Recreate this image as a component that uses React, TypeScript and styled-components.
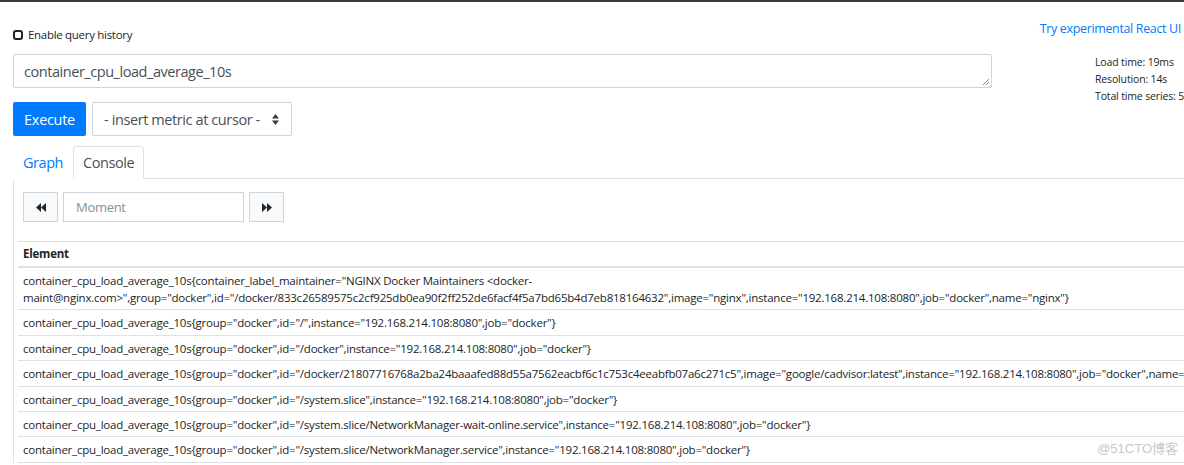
import styled, { createGlobalStyle } from "styled-components";

const GlobalStyle = createGlobalStyle`
  html, body {
    margin: 0;
    padding: 0;
    overflow: hidden;
    background: #fff;
  }
  body {
    font-family: "Open Sans", "Noto Sans", Arial, sans-serif;
    color: #212529;
  }
  * {
    box-sizing: border-box;
  }
`;

const Page = styled.div`
  position: relative;
  width: 1184px;
  height: 465px;
  overflow: hidden;
  border-top: 2px solid #343a40;
`;

const Wrap = styled.div`
  padding: 0 0 0 13px;
  width: 1300px;
`;

const TopRow = styled.div`
  display: flex;
  justify-content: space-between;
  align-items: flex-start;
  width: 1168px;
  padding-top: 18px;
`;

const CheckLabel = styled.label`
  display: flex;
  align-items: center;
  gap: 5px;
  font-size: 11.5px;
  letter-spacing: -0.3px;
  color: #212529;
  margin-top: 7px;
`;

const CheckBox = styled.span`
  display: inline-block;
  width: 10px;
  height: 10px;
  border: 2px solid #222;
  border-radius: 3px;
`;

const ReactLink = styled.a`
  font-size: 12.5px;
  letter-spacing: -0.35px;
  color: #007bff;
  text-decoration: none;
`;

const ExprRow = styled.div`
  display: flex;
  align-items: flex-start;
  margin-top: 12px;
  height: 34px;
`;

const ExprBox = styled.div`
  position: relative;
  width: 979px;
  height: 34px;
  border: 1px solid #ced4da;
  border-radius: 2px;
  padding: 7px 10px;
  font-size: 14.5px;
  letter-spacing: -0.45px;
  color: #495057;
`;

const Grip = styled.svg`
  position: absolute;
  right: 1px;
  bottom: 1px;
`;

const Stats = styled.div`
  margin-left: 103px;
  font-size: 10.5px;
  letter-spacing: -0.15px;
  line-height: 17px;
  color: #212529;
  white-space: nowrap;
`;

const ButtonRow = styled.div`
  display: flex;
  gap: 6px;
  margin-top: 14px;
`;

const PrimaryButton = styled.button`
  height: 34px;
  width: 73px;
  border: 0;
  border-radius: 2px;
  background: #007bff;
  color: #fff;
  font-family: inherit;
  font-size: 14.5px;
  letter-spacing: -0.3px;
  padding: 0;
`;

const SelectBox = styled.div`
  display: flex;
  align-items: center;
  justify-content: space-between;
  height: 34px;
  width: 200px;
  border: 1px solid #ced4da;
  border-radius: 2px;
  padding: 0 12px 0 11px;
  font-size: 14.5px;
  letter-spacing: -0.4px;
  color: #495057;
`;

const Tabs = styled.div`
  display: flex;
  align-items: flex-end;
  margin-top: 10px;
  height: 33px;
  border-bottom: 1px solid #dee2e6;
`;

const Tab = styled.div<{ $active?: boolean }>`
  height: 33px;
  padding: 0 9px;
  display: flex;
  align-items: center;
  font-size: 14.5px;
  letter-spacing: -0.45px;
  margin-bottom: -1px;
  color: ${(p) => (p.$active ? "#495057" : "#007bff")};
  background: #fff;
  border: 1px solid ${(p) => (p.$active ? "#dee2e6" : "transparent")};
  border-bottom-color: ${(p) => (p.$active ? "#fff" : "transparent")};
  border-radius: 4px 4px 0 0;
`;

const Panel = styled.div`
  border-left: 1px solid #dee2e6;
  padding: 13px 0 0 4px;
`;

const MomentRow = styled.div`
  display: flex;
  gap: 5px;
  margin-left: 5px;
`;

const NavButton = styled.button`
  width: 35px;
  height: 30px;
  background: #f8f9fa;
  border: 1px solid #ced4da;
  border-radius: 0;
  display: flex;
  align-items: center;
  justify-content: center;
  padding: 0;
`;

const MomentInput = styled.div`
  width: 181px;
  height: 30px;
  border: 1px solid #ced4da;
  padding: 0 12px;
  display: flex;
  align-items: center;
  font-size: 13px;
  letter-spacing: -0.3px;
  color: #868e96;
`;

const Table = styled.table`
  margin-top: 19px;
  border-collapse: collapse;
  font-size: 11.5px;
  letter-spacing: -0.22px;
  white-space: nowrap;
  min-width: 1180px;
`;

const HeadCell = styled.th`
  text-align: left;
  font-weight: 700;
  padding: 4px 5px 4px;
  line-height: 16px;
  border-top: 1px solid #dee2e6;
  border-bottom: 2px solid #dee2e6;
`;

const Cell = styled.td`
  padding: 4px 5px 3.4px;
  line-height: 17px;
  border-bottom: 1px solid #dee2e6;
  color: #212529;
`;

const Watermark = styled.div`
  position: absolute;
  right: 6px;
  bottom: 8px;
  font-size: 13px;
  color: #c8c8c8;
  font-family: "Liberation Sans", "Noto Sans CJK SC", sans-serif;
  background: rgba(255, 255, 255, 0.6);
`;

const rows: string[][] = [
  [
    'container_cpu_load_average_10s{container_label_maintainer="NGINX Docker Maintainers <docker-',
    'maint@nginx.com>",group="docker",id="/docker/833c26589575c2cf925db0ea90f2ff252de6facf4f5a7bd65b4d7eb818164632",image="nginx",instance="192.168.214.108:8080",job="docker",name="nginx"}',
  ],
  ['container_cpu_load_average_10s{group="docker",id="/",instance="192.168.214.108:8080",job="docker"}'],
  ['container_cpu_load_average_10s{group="docker",id="/docker",instance="192.168.214.108:8080",job="docker"}'],
  [
    'container_cpu_load_average_10s{group="docker",id="/docker/21807716768a2ba24baaafed88d55a7562eacbf6c1c753c4eeabfb07a6c271c5",image="google/cadvisor:latest",instance="192.168.214.108:8080",job="docker",name="cadvisor"}',
  ],
  ['container_cpu_load_average_10s{group="docker",id="/system.slice",instance="192.168.214.108:8080",job="docker"}'],
  [
    'container_cpu_load_average_10s{group="docker",id="/system.slice/NetworkManager-wait-online.service",instance="192.168.214.108:8080",job="docker"}',
  ],
  [
    'container_cpu_load_average_10s{group="docker",id="/system.slice/NetworkManager.service",instance="192.168.214.108:8080",job="docker"}',
  ],
];

function BackIcon() {
  return (
    <svg width="10" height="9" viewBox="0 0 10 9">
      <path d="M0 4.5L5 0v9zM5 4.5L10 0v9z" fill="#212529" />
    </svg>
  );
}

function ForwardIcon() {
  return (
    <svg width="10" height="9" viewBox="0 0 10 9">
      <path d="M10 4.5L5 0v9zM5 4.5L0 0v9z" fill="#212529" />
    </svg>
  );
}

export default function App() {
  return (
    <>
      <GlobalStyle />
      <Page>
        <Wrap>
          <TopRow>
            <CheckLabel>
              <CheckBox />
              Enable query history
            </CheckLabel>
            <ReactLink href="#">Try experimental React UI</ReactLink>
          </TopRow>
          <ExprRow>
            <ExprBox>
              container_cpu_load_average_10s
              <Grip width="8" height="8" viewBox="0 0 8 8">
                <path d="M7 1L1 7M7 4L4 7" stroke="#888" strokeWidth="1" />
              </Grip>
            </ExprBox>
            <Stats>
              Load time: 19ms
              <br />
              Resolution: 14s
              <br />
              Total time series: 5
            </Stats>
          </ExprRow>
          <ButtonRow>
            <PrimaryButton>Execute</PrimaryButton>
            <SelectBox>
              <span>- insert metric at cursor -</span>
              <svg width="7" height="11" viewBox="0 0 7 11">
                <path d="M3.5 0L7 4.5H0zM3.5 11L0 6.5h7z" fill="#343a40" />
              </svg>
            </SelectBox>
          </ButtonRow>
          <Tabs>
            <Tab>Graph</Tab>
            <Tab $active>Console</Tab>
          </Tabs>
          <Panel>
            <MomentRow>
              <NavButton>
                <BackIcon />
              </NavButton>
              <MomentInput>Moment</MomentInput>
              <NavButton>
                <ForwardIcon />
              </NavButton>
            </MomentRow>
            <Table>
              <thead>
                <tr>
                  <HeadCell>Element</HeadCell>
                </tr>
              </thead>
              <tbody>
                {rows.map((lines, i) => (
                  <tr key={i}>
                    <Cell>
                      {lines.map((l, j) => (
                        <span key={j}>
                          {j > 0 && <br />}
                          {l}
                        </span>
                      ))}
                    </Cell>
                  </tr>
                ))}
              </tbody>
            </Table>
          </Panel>
        </Wrap>
        <Watermark>@51CTO博客</Watermark>
      </Page>
    </>
  );
}
